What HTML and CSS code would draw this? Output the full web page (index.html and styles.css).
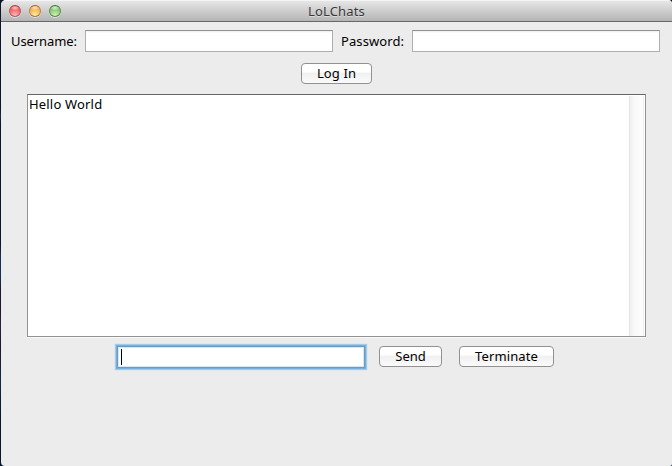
FILE: index.html
```html
<!DOCTYPE html>
<html lang="en">
<head>
<meta charset="utf-8">
<title>LoLChats</title>
<link rel="stylesheet" href="styles.css">
</head>
<body>
<main class="window">
  <header class="titlebar">
    <div class="lights"><i class="light red"></i><i class="light amber"></i><i class="light green"></i></div>
    <h1 class="title">LoLChats</h1>
  </header>
  <form class="login">
    <label class="label username" for="user">Username:</label>
    <input class="field" id="user" type="text">
    <label class="label password" for="pass">Password:</label>
    <input class="field" id="pass" type="password">
  </form>
  <div class="login-action"><button class="button log-in"><span>Log In</span></button></div>
  <section class="chat">
    <div class="messages"><span>Hello World</span></div>
    <div class="scrollbar"></div>
  </section>
  <div class="composer">
    <div class="message-field"><i class="caret"></i></div>
    <button class="button send"><span>Send</span></button>
    <button class="button terminate"><span>Terminate</span></button>
  </div>
</main>
</body>
</html>
```
FILE: styles.css
```css
* { box-sizing: border-box; }
body {
  margin: 0;
  height: 466px;
  overflow: hidden;
  padding-left: 1px;
  background: linear-gradient(#10152f 0 110px, #17284c 116px, #10152f 122px 245px, #143158 255px 275px, #211633 290px 310px, #29204b 325px, #211633 345px, #10284b 380px, #08162e 420px);
  font: 13px/16px "Noto Sans", "Open Sans", sans-serif;
  color: #000;
}
.window {
  height: 466px;
  border-radius: 5px 4px 2px 4px;
  background: #ececec;
  overflow: hidden;
}
.titlebar {
  display: grid;
  grid-template-columns: 69px 1fr 69px;
  height: 22px;
  align-items: center;
  border-top: 1px solid #f4f4f4;
  border-bottom: 1px solid #686868;
  background: linear-gradient(#e6e6e6, #b4b4b4);
}
.lights { display: flex; gap: 8px; padding-left: 8px; }
.light {
  width: 12px;
  height: 12px;
  border: 1px solid;
  border-radius: 50%;
  box-shadow: 0 1px 0 #ffffff80;
}
.red { border-color: #a43f42 #b9585b #a56565; background: radial-gradient(ellipse 5px 2.5px at 50% 18%, #ffe7e7cc, transparent), radial-gradient(circle at 50% 95%, #ffb9b9, #ee5a5f 70%); }
.amber { border-color: #a36725 #b98345 #9b7a4a; background: radial-gradient(ellipse 5px 2.5px at 50% 18%, #fff3ddcc, transparent), radial-gradient(circle at 50% 95%, #ffee9d, #f0ad54 70%); }
.green { border-color: #48763b #5f8c52 #618554; background: radial-gradient(ellipse 5px 2.5px at 50% 18%, #efffe9cc, transparent), radial-gradient(circle at 50% 95%, #d0f5ac, #80c171 70%); }
.title { margin: 0; text-align: center; font-size: 13px; font-weight: 400; line-height: 16px; letter-spacing: 0.15px; color: #383838; text-shadow: 0 1px 0 #ffffff70; }
.login { display: flex; align-items: center; height: 22px; margin: 8px 0 0 10px; }
.label { white-space: nowrap; }
.username { width: 74px; letter-spacing: -0.1px; }
.password { width: 71px; margin-left: 8px; letter-spacing: 0.1px; }
.field {
  width: 248px;
  height: 22px;
  border: 1px solid #aeaeae;
  border-top-color: #919191;
  padding: 2px;
  background: linear-gradient(#eee, #fff 2px);
  outline: 0;
}
.login-action { display: flex; margin: 11px 0 0 300px; }
.button {
  display: flex;
  align-items: center;
  justify-content: center;
  height: 21px;
  padding: 0 0 2px;
  border: 1px solid #919191;
  border-radius: 4px;
  background: linear-gradient(#fff 0 40%, #f1f1f1 50%, #fafafa);
  font: inherit;
  color: #000;
}
.log-in { width: 71px; letter-spacing: 0.1px; }
.chat {
  display: flex;
  width: 619px;
  height: 243px;
  margin: 10px 0 0 26px;
  border: 1px solid #929292;
  border-top-color: #666;
  background: #fff;
  box-shadow: 0 1px 0 #fafafa;
}
.messages { flex: 1; padding: 1px; letter-spacing: 0.18px; }
.scrollbar { width: 15px; margin: 1px 1px 0 0; border-left: 1px solid #e4e4e4; border-right: 1px solid #eee; background: linear-gradient(90deg, #f0f0f0, #fafafa 5px, #fcfcfc); }
.composer { display: flex; margin: 9px 0 0 116px; }
.message-field {
  width: 248px;
  height: 22px;
  padding: 2px 0 0 3px;
  border: 1px solid #699dc5;
  background: #fff;
  box-shadow: inset 0 0 0 1px #d5e7f5, 0 0 0 1px #78afd9, 0 0 1px 2px #a3cae8;
}
.caret { display: block; width: 1px; height: 16px; background: #000; }
.send { width: 63px; margin-left: 14px; }
.terminate { width: 95px; margin-left: 17px; letter-spacing: 0.1px; }
```
